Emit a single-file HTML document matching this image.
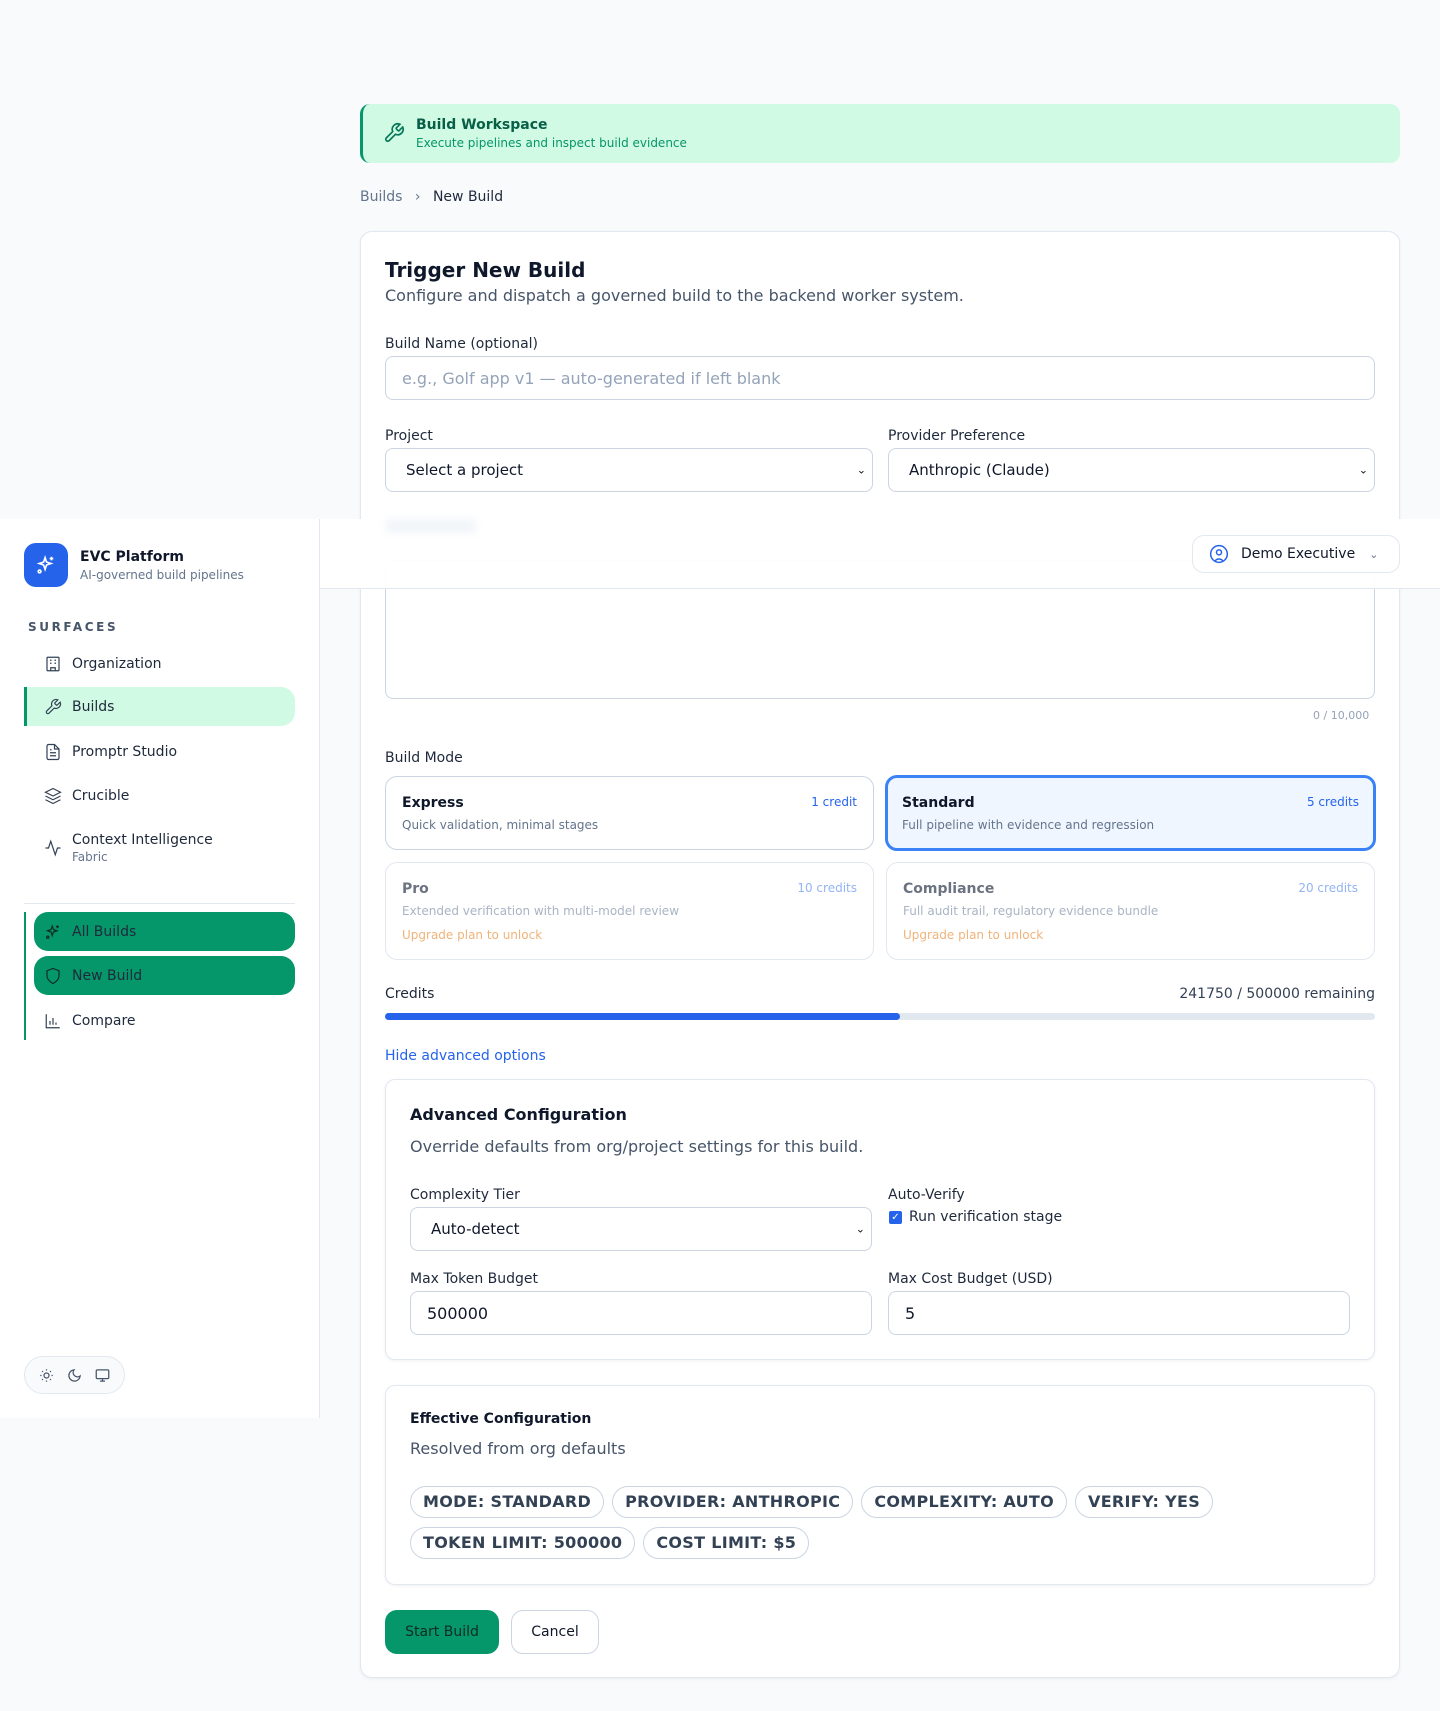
<!DOCTYPE html>
<html><head><meta charset="utf-8"><style>
*{box-sizing:border-box;margin:0;padding:0}
body{width:1440px;height:1711px;background:#f8fafc;font-family:"DejaVu Sans","Liberation Sans",sans-serif;color:#0f172a;position:relative;overflow:hidden}
.a{position:absolute}
.lbl{font-size:14px;color:#1e293b}
.inp{position:absolute;border:1px solid #cbd5e1;border-radius:8px;background:#fff;font-size:16px;display:flex;align-items:center;padding:0 16px}
.sel{padding:0 20px;font-size:15px}
.chev{position:absolute;right:6px;top:50%;transform:translateY(-50%);font-size:11px;color:#111}
.mode{position:absolute;border:1px solid #cbd5e1;border-radius:12px;background:#fff;padding:0 16px}
.mode b{position:absolute;left:16px;top:18px;font-size:14px}
.mode .d{position:absolute;left:16px;top:41px;font-size:12px;color:#64748b}
.mode .c{position:absolute;right:16px;top:18px;font-size:12px;color:#2563eb}
.mode .u{position:absolute;left:16px;top:65px;font-size:12px;color:#f0b37a}
.chip{display:inline-block;border:1px solid #cbd5e1;border-radius:16px;height:32px;line-height:30px;padding:0 12px;font-size:16px;font-weight:bold;letter-spacing:0.3px;color:#334155;margin-right:8px;margin-bottom:9px}
.nav{position:absolute;left:24px;width:271px;height:39px;display:flex;align-items:center;padding-left:20px;font-size:14px;color:#1e293b}
.nav svg{width:18px;height:18px;margin-right:10px;fill:none;stroke:#334155;stroke-width:1.6}
</style></head><body>
<div class="a" style="left:360px;top:104px;width:1040px;height:59px;background:#d1fae5;border-left:3px solid #059669;border-radius:10px"></div>
<svg class="a" style="left:383px;top:122px" width="22" height="22" viewBox="0 0 24 24" fill="none" stroke="#047857" stroke-width="1.8"><path d="M14.7 6.3a1 1 0 000 1.4l1.6 1.6a1 1 0 001.4 0l3.8-3.8a6 6 0 01-7.9 7.9l-6.9 6.9a2.1 2.1 0 01-3-3l6.9-6.9a6 6 0 017.9-7.9z"/></svg>
<div class="a" style="left:416px;top:117px;font-size:14px;font-weight:bold;color:#065f46">Build Workspace</div>
<div class="a" style="left:416px;top:136px;font-size:12px;color:#059669">Execute pipelines and inspect build evidence</div>
<div class="a" style="left:360px;top:189px;font-size:14px;color:#64748b">Builds <span style="margin:0 8px">›</span> <span style="color:#1e293b">New Build</span></div>
<div class="a" style="left:360px;top:231px;width:1040px;height:1447px;background:#fff;border:1px solid #e2e8f0;border-radius:12px;box-shadow:0 1px 3px rgba(0,0,0,.06)"></div>
<div class="a" style="left:385px;top:258px;font-size:20px;font-weight:bold">Trigger New Build</div>
<div class="a" style="left:385px;top:286px;font-size:16px;color:#475569">Configure and dispatch a governed build to the backend worker system.</div>
<div class="a lbl" style="left:385px;top:336px">Build Name (optional)</div>
<div class="inp" style="left:385px;top:356px;width:990px;height:44px;color:#94a3b8">e.g., Golf app v1 — auto-generated if left blank</div>
<div class="a lbl" style="left:385px;top:428px">Project</div>
<div class="inp sel" style="left:385px;top:448px;width:488px;height:44px">Select a project<span class="chev">⌄</span></div>
<div class="a lbl" style="left:888px;top:428px">Provider Preference</div>
<div class="inp sel" style="left:888px;top:448px;width:487px;height:44px">Anthropic (Claude)<span class="chev">⌄</span></div>
<div class="a" style="left:385px;top:560px;width:990px;height:139px;border:1px solid #cbd5e1;border-radius:8px"></div>
<div class="a" style="left:1313px;top:709px;font-size:11px;color:#94a3b8">0 / 10,000</div>
<div class="a lbl" style="left:385px;top:750px">Build Mode</div>
<div class="mode" style="left:385px;top:776px;width:489px;height:74px"><b>Express</b><span class="c">1 credit</span><span class="d">Quick validation, minimal stages</span></div>
<div class="mode" style="left:885px;top:775px;width:491px;height:76px;border:3px solid #3b82f6;background:#eff6ff"><b style="left:14px;top:17px">Standard</b><span class="c" style="right:14px;top:17px">5 credits</span><span class="d" style="left:14px;top:40px">Full pipeline with evidence and regression</span></div>
<div class="mode" style="left:385px;top:862px;width:489px;height:98px;border-color:#e2e8f0"><b style="color:#6b7280">Pro</b><span class="c" style="color:#93b4f5">10 credits</span><span class="d" style="color:#a9b4c4">Extended verification with multi-model review</span><span class="u">Upgrade plan to unlock</span></div>
<div class="mode" style="left:886px;top:862px;width:489px;height:98px;border-color:#e2e8f0"><b style="color:#6b7280">Compliance</b><span class="c" style="color:#93b4f5">20 credits</span><span class="d" style="color:#a9b4c4">Full audit trail, regulatory evidence bundle</span><span class="u">Upgrade plan to unlock</span></div>
<div class="a lbl" style="left:385px;top:986px">Credits</div>
<div class="a lbl" style="right:65px;top:986px;color:#334155">241750 / 500000 remaining</div>
<div class="a" style="left:385px;top:1013px;width:990px;height:7px;background:#e2e8f0;border-radius:4px"><div style="width:515px;height:7px;background:#2563eb;border-radius:4px"></div></div>
<div class="a" style="left:385px;top:1048px;font-size:14px;color:#2563eb">Hide advanced options</div>
<div class="a" style="left:385px;top:1079px;width:990px;height:281px;border:1px solid #e2e8f0;border-radius:10px;box-shadow:0 1px 3px rgba(0,0,0,.06)"></div>
<div class="a" style="left:410px;top:1105px;font-size:16px;font-weight:bold">Advanced Configuration</div>
<div class="a" style="left:410px;top:1137px;font-size:16px;color:#475569">Override defaults from org/project settings for this build.</div>
<div class="a lbl" style="left:410px;top:1187px">Complexity Tier</div>
<div class="inp sel" style="left:410px;top:1207px;width:462px;height:44px">Auto-detect<span class="chev">⌄</span></div>
<div class="a lbl" style="left:888px;top:1187px">Auto-Verify</div>
<div class="a" style="left:889px;top:1211px;width:13px;height:13px;background:#2563eb;border-radius:2px;color:#fff;font-size:10px;line-height:13px;text-align:center">✓</div>
<div class="a lbl" style="left:909px;top:1209px">Run verification stage</div>
<div class="a lbl" style="left:410px;top:1271px">Max Token Budget</div>
<div class="inp" style="left:410px;top:1291px;width:462px;height:44px">500000</div>
<div class="a lbl" style="left:888px;top:1271px">Max Cost Budget (USD)</div>
<div class="inp" style="left:888px;top:1291px;width:462px;height:44px">5</div>
<div class="a" style="left:385px;top:1385px;width:990px;height:200px;border:1px solid #e2e8f0;border-radius:10px;box-shadow:0 1px 3px rgba(0,0,0,.06)"></div>
<div class="a" style="left:410px;top:1411px;font-size:14px;font-weight:bold">Effective Configuration</div>
<div class="a" style="left:410px;top:1439px;font-size:16px;color:#475569">Resolved from org defaults</div>
<div class="a" style="left:410px;top:1486px;width:950px">
<span class="chip">MODE: STANDARD</span><span class="chip">PROVIDER: ANTHROPIC</span><span class="chip">COMPLEXITY: AUTO</span><span class="chip">VERIFY: YES</span><br>
<span class="chip">TOKEN LIMIT: 500000</span><span class="chip">COST LIMIT: $5</span></div>
<div class="a" style="left:385px;top:1610px;width:114px;height:44px;background:#059669;border-radius:12px;font-size:14px;color:#0f2d22;display:flex;align-items:center;justify-content:center">Start Build</div>
<div class="a" style="left:511px;top:1610px;width:88px;height:44px;border:1px solid #cbd5e1;border-radius:12px;font-size:14px;display:flex;align-items:center;justify-content:center">Cancel</div>
<div class="a" style="left:320px;top:519px;width:1120px;height:70px;background:rgba(255,255,255,.95);border-bottom:1px solid #e2e8f0"></div>
<div class="a" style="left:386px;top:519px;width:90px;height:14px;background:#f1f5f9;filter:blur(4px)"></div>
<div class="a" style="left:1192px;top:535px;width:208px;height:38px;border:1px solid #e2e8f0;border-radius:12px;background:#fff;font-size:14px;display:flex;align-items:center;padding-left:16px">
<svg width="20" height="20" viewBox="0 0 24 24" fill="none" stroke="#2563eb" stroke-width="1.8"><circle cx="12" cy="12" r="10"/><circle cx="12" cy="10" r="3"/><path d="M7 20.7a6 6 0 0110 0"/></svg><span style="margin-left:12px">Demo Executive</span><span style="margin-left:14px;color:#64748b;font-size:11px">⌄</span></div>
<div class="a" style="left:0;top:519px;width:320px;height:899px;background:#fff;border-right:1px solid #e2e8f0"></div>
<div class="a" style="left:24px;top:543px;width:44px;height:44px;background:#2563eb;border-radius:12px;display:flex;align-items:center;justify-content:center"><svg width="22" height="22" viewBox="0 0 24 24" fill="none" stroke="#fff" stroke-width="1.8"><path d="M11 4l1.6 4.8L17.4 10.4 12.6 12 11 16.8 9.4 12 4.6 10.4 9.4 8.8z"/><path d="M18 3v4M16 5h4"/><circle cx="5" cy="19" r="1.5"/></svg></div>
<div class="a" style="left:80px;top:549px;font-size:14px;font-weight:bold">EVC Platform</div>
<div class="a" style="left:80px;top:568px;font-size:12px;color:#64748b">AI-governed build pipelines</div>
<div class="a" style="left:28px;top:620px;font-size:12px;font-weight:bold;letter-spacing:2.6px;color:#475569">SURFACES</div>
<div class="nav" style="top:644px"><svg viewBox="0 0 24 24"><rect x="4" y="3" width="16" height="18" rx="1"/><path d="M9 21v-4h6v4M8 7h2M14 7h2M8 11h2M14 11h2"/></svg>Organization</div>
<div class="nav" style="top:687px;background:#d1fae5;border-left:3px solid #059669;border-radius:0 14px 14px 0;padding-left:17px"><svg viewBox="0 0 24 24"><path d="M14.7 6.3a1 1 0 000 1.4l1.6 1.6a1 1 0 001.4 0l3.8-3.8a6 6 0 01-7.9 7.9l-6.9 6.9a2.1 2.1 0 01-3-3l6.9-6.9a6 6 0 017.9-7.9z"/></svg>Builds</div>
<div class="nav" style="top:732px"><svg viewBox="0 0 24 24"><path d="M14 2H6a2 2 0 00-2 2v16a2 2 0 002 2h12a2 2 0 002-2V8z"/><path d="M14 2v6h6M8 13h8M8 17h8M8 9h2"/></svg>Promptr Studio</div>
<div class="nav" style="top:776px"><svg viewBox="0 0 24 24"><path d="M12 2L2 7l10 5 10-5z"/><path d="M2 12l10 5 10-5M2 17l10 5 10-5"/></svg>Crucible</div>
<div class="nav" style="top:827px;height:42px"><svg viewBox="0 0 24 24"><path d="M22 12h-4l-3 9L9 3l-3 9H2"/></svg><div>Context Intelligence<div style="font-size:12px;color:#64748b;margin-top:2px">Fabric</div></div></div>
<div class="a" style="left:24px;top:903px;width:271px;height:1px;background:#e2e8f0"></div>
<div class="a" style="left:24px;top:912px;width:2px;height:128px;background:#059669"></div>
<div class="nav" style="left:34px;width:261px;top:912px;background:#059669;border-radius:14px;padding-left:10px"><svg viewBox="0 0 24 24" style="stroke:#0f2d22"><path d="M11 4l1.6 4.8L17.4 10.4 12.6 12 11 16.8 9.4 12 4.6 10.4 9.4 8.8z"/><path d="M18 3v4M16 5h4"/><circle cx="5" cy="19" r="1.5"/></svg>All Builds</div>
<div class="nav" style="left:34px;width:261px;top:956px;background:#059669;border-radius:14px;padding-left:10px"><svg viewBox="0 0 24 24" style="stroke:#0f2d22"><path d="M12 22s8-4 8-10V5l-8-3-8 3v7c0 6 8 10 8 10z"/></svg>New Build</div>
<div class="nav" style="left:34px;width:261px;top:1001px;padding-left:10px"><svg viewBox="0 0 24 24"><path d="M3 3v18h18M8 17v-5M12 17V8M16 17v-3"/></svg>Compare</div>
<div class="a" style="left:24px;top:1356px;width:101px;height:38px;border:1px solid #e2e8f0;border-radius:19px;background:#f8fafc;display:flex;align-items:center;justify-content:space-around;padding:0 8px">
<svg width="15" height="15" viewBox="0 0 24 24" fill="none" stroke="#475569" stroke-width="2"><circle cx="12" cy="12" r="4"/><path d="M12 2v2M12 20v2M4.9 4.9l1.4 1.4M17.7 17.7l1.4 1.4M2 12h2M20 12h2M4.9 19.1l1.4-1.4M17.7 6.3l1.4-1.4"/></svg>
<svg width="15" height="15" viewBox="0 0 24 24" fill="none" stroke="#475569" stroke-width="2"><path d="M21 12.8A9 9 0 1111.2 3a7 7 0 009.8 9.8z"/></svg>
<svg width="15" height="15" viewBox="0 0 24 24" fill="none" stroke="#475569" stroke-width="2"><rect x="2" y="3" width="20" height="14" rx="2"/><path d="M8 21h8M12 17v4"/></svg></div>
</body></html>
